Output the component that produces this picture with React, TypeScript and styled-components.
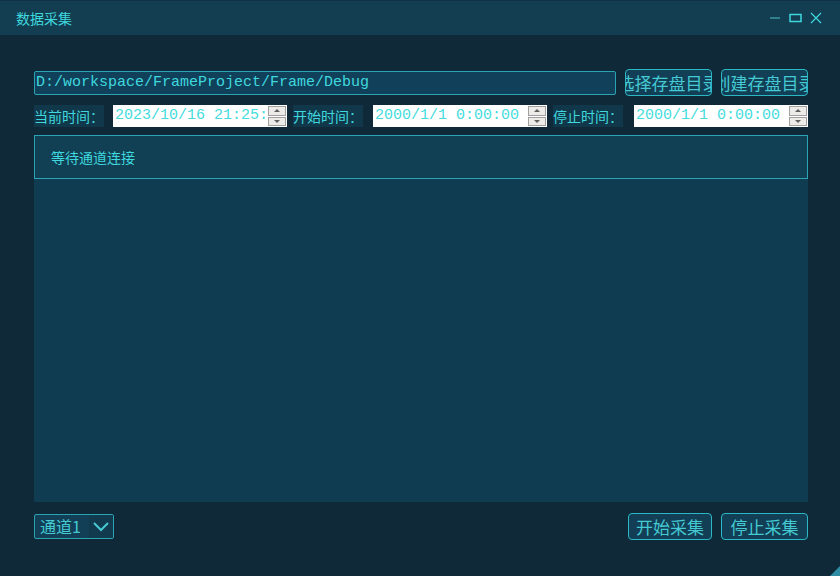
import React from 'react'
import styled, { createGlobalStyle } from 'styled-components'

const Cyan = '#3fd8de'
const Border = '#2aa3b2'

const GlobalStyle = createGlobalStyle`
    html, body {
        margin: 0;
        padding: 0;
        background: #0f2939;
    }
    * {
        box-sizing: border-box;
    }
`

const Window = styled.div`
    width: 840px;
    height: 576px;
    display: flex;
    flex-direction: column;
    background: #0f2939;
    font-family: 'Noto Sans CJK SC', 'Noto Sans', sans-serif;
    color: ${Cyan};
    position: relative;
    overflow: hidden;
`

const TitleBar = styled.div`
    height: 35px;
    display: flex;
    align-items: center;
    justify-content: space-between;
    padding: 0 18px 0 16px;
    background: #133d51;
    border-top: 1px solid #0f3245;
`

const Title = styled.span`
    font-size: 14px;
    color: ${Cyan};
`

const TitleButtons = styled.div`
    display: flex;
    align-items: center;
    gap: 8px;
`

const Main = styled.div`
    flex: 1;
    display: flex;
    flex-direction: column;
    padding: 34px 32px 36px 34px;
`

const Row = styled.div<{ mt?: number; h: number }>`
    display: flex;
    align-items: center;
    height: ${(p) => p.h}px;
    margin-top: ${(p) => p.mt || 0}px;
`

const PathInput = styled.div`
    width: 582px;
    height: 24px;
    border: 1px solid ${Border};
    border-radius: 2px;
    background: #11405a;
    font-family: 'Liberation Mono', monospace;
    font-size: 15px;
    line-height: 22px;
    padding-left: 1px;
    color: ${Cyan};
    white-space: nowrap;
    overflow: hidden;
`

const Button = styled.button<{ w: number; ml?: number }>`
    width: ${(p) => p.w}px;
    height: 27px;
    margin-left: ${(p) => p.ml || 0}px;
    border: 1px solid #2bb8c4;
    border-radius: 4px;
    background: #123f56;
    color: #45c9d2;
    font-family: 'Noto Sans CJK SC', sans-serif;
    font-size: 17px;
    line-height: 25px;
    padding: 0;
    overflow: hidden;
    white-space: nowrap;
    display: flex;
    justify-content: center;
`

const Label = styled.span<{ ml?: number }>`
    width: 70px;
    height: 22px;
    margin-left: ${(p) => p.ml || 0}px;
    background: #11374b;
    font-size: 14px;
    line-height: 22px;
    color: ${Cyan};
    white-space: nowrap;
`

const DateBox = styled.div<{ ml: number }>`
    width: 174px;
    height: 22px;
    margin-left: ${(p) => p.ml}px;
    background: #ffffff;
    display: flex;
    align-items: stretch;
`

const DateText = styled.span`
    flex: 1;
    font-family: 'Liberation Mono', monospace;
    font-size: 15px;
    line-height: 22px;
    padding-left: 2px;
    color: #44dcdc;
    white-space: nowrap;
    overflow: hidden;
`

const Spin = styled.div`
    width: 19px;
    display: flex;
    flex-direction: column;
    padding: 1px 1px 1px 0;
    gap: 1px;
`

const SpinHalf = styled.div<{ down?: boolean }>`
    flex: 1;
    background: #ecebe8;
    border: 1px solid #a0a0a0;
    display: flex;
    align-items: center;
    justify-content: center;
    &::after {
        content: '';
        width: 0;
        height: 0;
        border-left: 3px solid transparent;
        border-right: 3px solid transparent;
        ${(p) => (p.down ? 'border-top: 3px solid #606060;' : 'border-bottom: 3px solid #606060;')}
    }
`

const Group = styled.div`
    height: 44px;
    margin-top: 8px;
    border: 1px solid ${Border};
    background: #113f54;
    display: flex;
    align-items: center;
    padding-left: 16px;
    font-size: 14px;
    color: ${Cyan};
`

const Content = styled.div`
    flex: 1;
    background: #0f3c51;
`

const Combo = styled.div`
    width: 80px;
    height: 25px;
    border: 1px solid ${Border};
    border-radius: 2px;
    background: #123f56;
    display: flex;
    align-items: center;
    font-size: 16px;
    color: #45c9d2;
`

const ComboText = styled.span`
    flex: 1;
    padding-left: 5px;
    line-height: 23px;
`

const ComboArrow = styled.span`
    width: 24px;
    height: 23px;
    display: flex;
    align-items: center;
    justify-content: center;
    background: #113a4f;
`

const Spacer = styled.div`
    flex: 1;
`

const Grip = styled.div`
    position: absolute;
    right: 0;
    bottom: 0;
    width: 0;
    height: 0;
    border-left: 10px solid transparent;
    border-bottom: 10px solid #2f8ea4;
`

const DateField = ({ value, ml }: { value: string; ml: number }) => (
    <DateBox ml={ml}>
        <DateText>{value}</DateText>
        <Spin>
            <SpinHalf />
            <SpinHalf down />
        </Spin>
    </DateBox>
)

const App = () => {
    return (
        <>
            <GlobalStyle />
            <Window>
                <TitleBar>
                    <Title>数据采集</Title>
                    <TitleButtons>
                        <svg width='12' height='12' viewBox='0 0 12 12'>
                            <line x1='1' y1='6' x2='11' y2='6' stroke='#2f7f8c' strokeWidth='2' />
                        </svg>
                        <svg width='13' height='12' viewBox='0 0 13 12'>
                            <rect x='1' y='2.5' width='11' height='7' fill='none' stroke={Cyan} strokeWidth='1.5' />
                        </svg>
                        <svg width='12' height='12' viewBox='0 0 12 12'>
                            <path d='M1 1 L11 11 M11 1 L1 11' stroke={Cyan} strokeWidth='1.2' />
                        </svg>
                    </TitleButtons>
                </TitleBar>
                <Main>
                    <Row h={27}>
                        <PathInput>D:/workspace/FrameProject/Frame/Debug</PathInput>
                        <Button w={87} ml={9}>选择存盘目录</Button>
                        <Button w={87} ml={9}>创建存盘目录</Button>
                    </Row>
                    <Row h={22} mt={9}>
                        <Label>当前时间：</Label>
                        <DateField value='2023/10/16 21:25:36' ml={9} />
                        <Label ml={6}>开始时间：</Label>
                        <DateField value='2000/1/1 0:00:00' ml={10} />
                        <Label ml={6}>停止时间：</Label>
                        <DateField value='2000/1/1 0:00:00' ml={11} />
                    </Row>
                    <Group>等待通道连接</Group>
                    <Content />
                    <Row h={27} mt={11}>
                        <Combo>
                            <ComboText>通道1</ComboText>
                            <ComboArrow>
                                <svg width='16' height='10' viewBox='0 0 16 10'>
                                    <path d='M1 1 L8 8 L15 1' fill='none' stroke='#45c9d2' strokeWidth='2' />
                                </svg>
                            </ComboArrow>
                        </Combo>
                        <Spacer />
                        <Button w={84}>开始采集</Button>
                        <Button w={87} ml={9}>停止采集</Button>
                    </Row>
                </Main>
                <Grip />
            </Window>
        </>
    )
}

export default App
